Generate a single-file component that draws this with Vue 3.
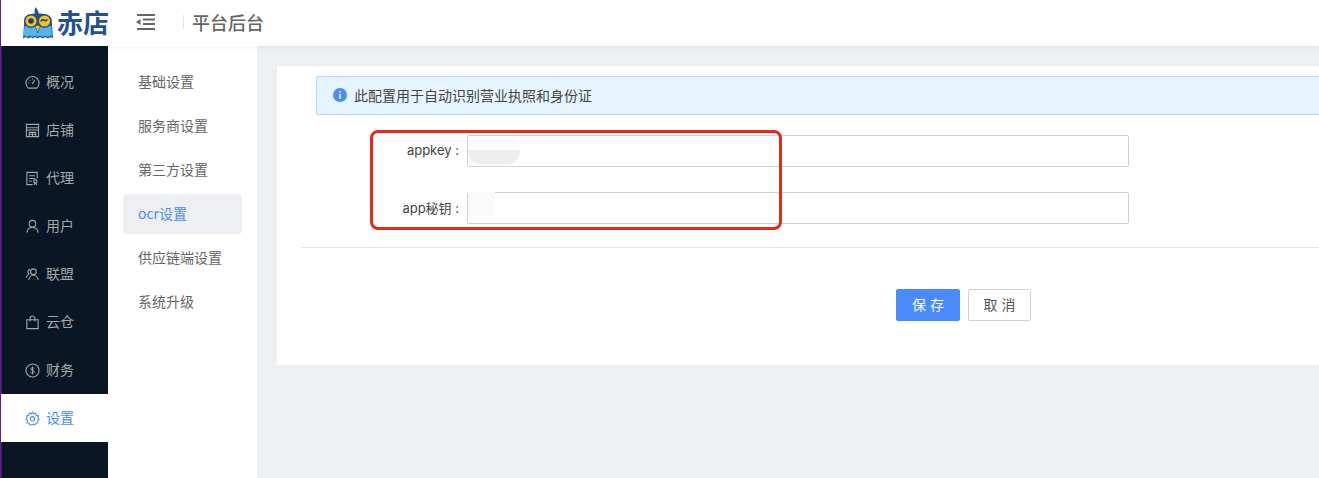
<script setup>
const menus = [
  { name: '概况', icon: 'gauge' },
  { name: '店铺', icon: 'shop' },
  { name: '代理', icon: 'agent' },
  { name: '用户', icon: 'user' },
  { name: '联盟', icon: 'team' },
  { name: '云仓', icon: 'bag' },
  { name: '财务', icon: 'money' },
  { name: '设置', icon: 'gear', active: true },
]
const subs = [
  { name: '基础设置' },
  { name: '服务商设置' },
  { name: '第三方设置' },
  { name: 'ocr设置', active: true },
  { name: '供应链端设置' },
  { name: '系统升级' },
]
</script>

<template>
  <div class="page">
    <header class="top">
      <div class="brand">
        <svg class="owl" width="30" height="32" viewBox="0 0 30 32">
          <path d="M12 8c-.8-3-.6-6 .8-8 .5 1.800 2.200 3 2.700 5 .3 1.200 0 2.200-.5 3z" fill="#24508f"/>
          <path d="M1.500 12C2 8.500 8 6.500 14.700 6.500S28 8.500 28.500 12L30 31.500l-2.500-1.500-2.700 1.500-2.500-1.500-2.600 1.500-2.600-1.500-2.500 1.500-2.600-1.500-2.600 1.500L7.800 30l-2.600 1.500L2.600 30 0 31.500z" fill="#24508f"/>
          <path d="M1.700 19h26.600l.7 10.500-1.500-.9-2.700 1.500-2.500-1.500-2.600 1.500-2.600-1.500-2.500 1.500-2.600-1.500-2.600 1.500-2.500-1.500-2.600 1.500-2.600-1.500-1.800 1z" fill="#55b3ee"/>
          <circle cx="8" cy="14" r="6.300" fill="#f6c21c" stroke="#24508f" stroke-width="1.500"/>
          <circle cx="21.500" cy="14" r="6.300" fill="#f6c21c" stroke="#24508f" stroke-width="1.500"/>
          <circle cx="8" cy="14" r="2.800" fill="#1d3e73"/>
          <path d="M17.800 14.500c1-1.800 2.400-2.300 3.400-1.400s2 .9 3.200-.6" fill="none" stroke="#1d3e73" stroke-width="1.500"/>
          <path d="M12 18.500h5.400L14.700 26z" fill="#f6c21c" stroke="#24508f" stroke-width=".7"/>
        </svg>
        <span class="logo-text">赤店</span>
      </div>
      <svg class="fold" width="19" height="16" viewBox="0 0 19 16">
        <path d="M1 1h18M7 5.500h12M7 10h12M1 15h18" stroke="#666" stroke-width="1.800" fill="none"/>
        <path d="M0 8l4.500-3v6z" fill="#666"/>
      </svg>
      <span class="sep"></span>
      <span class="title">平台后台</span>
    </header>

    <div class="body">
      <nav class="side">
        <a v-for="m in menus" :key="m.name" class="side-item" :class="{ on: m.active }">
          <svg class="ico" width="15" height="15" viewBox="0 0 16 16" fill="none" stroke="currentColor" stroke-width="1.150">
            <template v-if="m.icon === 'gauge'">
              <path d="M3.500 14A7 7 0 1 1 12.500 14z"/><path d="M7.500 9.500l3-4M3.500 8.500h1M5 5.300l.7.7M8 3.800v1"/>
            </template>
            <template v-else-if="m.icon === 'shop'">
              <path d="M1.500 1.500h13v13h-13zM1.500 5h13M1.500 7.500h13"/><path d="M4.500 14.500v-4.500h7v4.500M4.500 12h7M8 10v4.500"/>
            </template>
            <template v-else-if="m.icon === 'agent'">
              <path d="M8 14.500H2v-13h11v6.500M4.500 5h6M4.500 8h6M4.500 11h2.500"/><circle cx="11" cy="11" r="1.800"/><path d="M9.500 15l1-2.500M12.500 15l-1-2.500"/>
            </template>
            <template v-else-if="m.icon === 'user'">
              <circle cx="8" cy="5" r="3.500"/><path d="M2 14.500c.4-3.500 3-5.500 6-5.500s5.600 2 6 5.500"/>
            </template>
            <template v-else-if="m.icon === 'team'">
              <circle cx="9" cy="5" r="3"/><path d="M4 14c.3-3 2.500-5.200 5-5.200s4.700 2.200 5 5.200M5.500 2.500a2.600 2.600 0 0 0-1.200 4.800C2.800 8 1.800 9.500 1.500 11.500"/>
            </template>
            <template v-else-if="m.icon === 'bag'">
              <path d="M2 5h12v9.500H2zM5.500 7V3.500a2.500 2.500 0 0 1 5 0V7"/>
            </template>
            <template v-else-if="m.icon === 'money'">
              <circle cx="8" cy="8" r="7"/><path d="M10 6c-.5-1-3.500-1.300-4 .2C5.600 8 10.300 7.800 10 9.800c-.3 1.500-3.500 1.300-4.200 0M8 3.800v8.400" stroke-width="1"/>
            </template>
            <template v-else>
              <path d="M8 1l1.300 2 2.300-.7.500 2.300 2.300.6-.6 2.300L15 9l-1.600 1.400.5 2.300-2.300.4-1.100 2-2.500-.9-2.500.9-1.100-2-2.300-.4.5-2.300L1 9l1.200-1.500-.6-2.300 2.300-.6.500-2.300 2.300.7z"/><circle cx="8" cy="8.300" r="2.300"/>
            </template>
          </svg>
          <span class="side-label">{{ m.name }}</span>
        </a>
      </nav>

      <aside class="sub">
        <a v-for="s in subs" :key="s.name" class="sub-item" :class="{ on: s.active }">{{ s.name }}</a>
      </aside>

      <main class="main">
        <section class="card">
          <div class="alert">
            <svg class="info" width="14" height="14" viewBox="0 0 14 14">
              <circle cx="7" cy="7" r="7" fill="#4a8bfc"/>
              <rect x="6.200" y="3" width="1.600" height="1.700" fill="#fff"/>
              <rect x="6.200" y="5.800" width="1.600" height="5" fill="#fff"/>
            </svg>
            此配置用于自动识别营业执照和身份证
          </div>
          <form class="form">
            <div class="row">
              <label class="lab">appkey :</label>
              <div class="field"><span class="blur one"></span></div>
            </div>
            <div class="row">
              <label class="lab">app秘钥 :</label>
              <div class="field"><span class="blur two"></span></div>
            </div>
            <div class="mark"></div>
          </form>
          <div class="line"></div>
          <div class="actions">
            <button type="button" class="btn primary">保 存</button>
            <button type="button" class="btn">取 消</button>
          </div>
        </section>
      </main>
    </div>
  </div>
</template>

<style>
html, body { margin: 0; padding: 0; overflow: hidden; background: #eeeff3; }
</style>

<style scoped>
* { box-sizing: border-box; }
.page {
  width: 1319px;
  height: 478px;
  overflow: hidden;
  display: flex;
  flex-direction: column;
  font-family: "Inter", "Noto Sans CJK SC", sans-serif;
  font-size: 14px;
  border-left: 1px solid #5b1f8a;
  background: #eeeff3;
}
.top {
  height: 46px;
  flex: none;
  background: #fff;
  display: flex;
  align-items: center;
  padding-bottom: 3px;
  position: relative;
  z-index: 2;
  box-shadow: 0 1px 6px rgba(0, 0, 0, .06);
}
.brand { display: flex; align-items: center; margin-left: 22px; width: 113px; }
.owl { margin-top: 3px; margin-right: 4px; flex: none; }
.logo-text {
  font-family: "Noto Sans CJK SC", sans-serif;
  font-size: 26px;
  font-weight: 700;
  color: #24508f;
  line-height: 1;
}
.fold { margin-right: 28px; flex: none; }
.sep { width: 1px; height: 14px; background: #e3e3e3; margin-right: 8px; }
.title { font-size: 18px; color: #666; font-weight: 500; font-family: "Noto Sans CJK SC", sans-serif; }
.body { flex: 1; display: flex; min-height: 0; }
.side { width: 107px; flex: none; background: #0a1623; padding-top: 12px; border-left: 1px solid #4a1b74; }
.side-item {
  height: 48px;
  display: flex;
  align-items: center;
  padding-left: 23px;
  color: #a3a8ae;
  gap: 6px;
  font-family: "Noto Sans CJK SC", sans-serif;
}
.side-label { padding-bottom: 2px; }
.side-item.on { background: #fff; color: #4a8bfc; margin-left: -1px; padding-left: 24px; position: relative; }
.ico { flex: none; }
.sub { width: 149px; flex: none; background: #fff; padding: 16px 15px 0; }
.sub-item {
  display: block;
  height: 40px;
  line-height: 38px;
  margin-bottom: 4px;
  padding-left: 15px;
  border-radius: 4px;
  color: #666;
  white-space: nowrap;
  font-family: "Noto Sans CJK SC", sans-serif;
}
.sub-item.on { background: #eeeff3; color: #4a8bfc; }
.main { flex: 1; min-width: 0; padding: 20px 0 0 20px; }
.card {
  width: 1100px;
  height: 299px;
  background: #fff;
  padding: 10px 0 0 24px;
  position: relative;
}
.alert {
  margin-left: 15px;
  height: 39px;
  display: flex;
  align-items: center;
  gap: 7px;
  padding-left: 16px;
  padding-bottom: 1px;
  background: #e6f4ff;
  border: 1px solid #a9dcff;
  border-radius: 2px;
  color: #444;
  font-family: "Noto Sans CJK SC", sans-serif;
}
.form { position: relative; margin-top: 20px; }
.row { display: flex; align-items: center; height: 32px; margin-bottom: 25px; }
.lab {
  width: 166px;
  text-align: right;
  padding-right: 8px;
  padding-bottom: 2px;
  color: #444;
  white-space: nowrap;
  font-size: 13px;
}
.field {
  width: 662px;
  height: 32px;
  border: 1px solid #d0d0d0;
  border-radius: 2px;
  background: #fff;
  position: relative;
}
.blur { position: absolute; display: block; }
.blur.one { left: 0; top: 1px; width: 52px; height: 27px; background: linear-gradient(#fbfbfb 48%, #eeeeee 48%); border-radius: 13px; }
.blur.two { left: 0; top: -1px; width: 27px; height: 24px; background: #fafafa; }
.mark {
  position: absolute;
  left: 69px;
  top: -5px;
  width: 412px;
  height: 100px;
  border: 3px solid #e02b1d;
  border-radius: 8px;
  pointer-events: none;
}
.line { margin-top: -2px; height: 1px; background: #e4e4e4; }
.actions { display: flex; gap: 8px; padding-left: 595px; margin-top: 41px; }
.btn {
  width: 63px;
  height: 32px;
  border: 1px solid #d0d0d0;
  border-radius: 2px;
  background: #fff;
  color: #555;
  font: 14px "Noto Sans CJK SC", sans-serif;
  word-spacing: 1px;
  padding: 0 0 2px;
}
.btn.primary { width: 64px; background: #4a8bfc; border-color: #4a8bfc; color: #fff; }
</style>
